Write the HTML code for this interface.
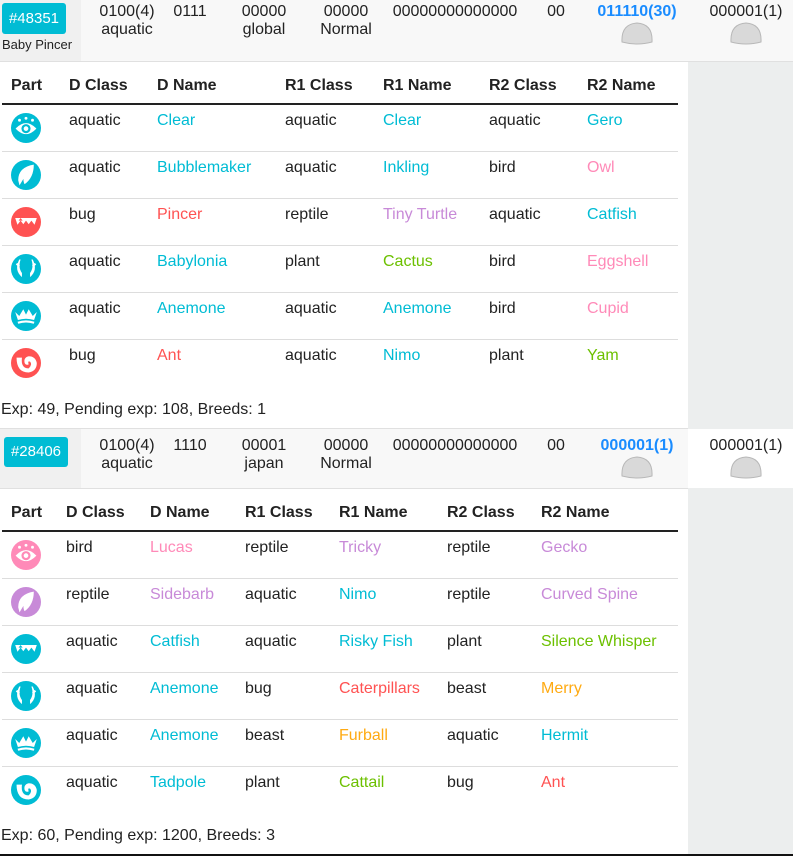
<!DOCTYPE html>
<html><head><meta charset="utf-8"><style>
*{margin:0;padding:0;box-sizing:border-box}
body{width:793px;height:856px;position:relative;overflow:hidden;background:#fff;font-family:"Liberation Sans",sans-serif;font-size:16px;color:#222}
.a{position:absolute;white-space:nowrap;line-height:18px}
.c{transform:translateX(-50%);text-align:center}
.b{font-weight:bold}
.aq{color:#00bcd4}.bu{color:#ff5252}.re{color:#c88ad8}.pl{color:#6cc000}.bi{color:#ff8ab8}.be{color:#ffaa12}
.tag{position:absolute;background:#00bcd4;color:#fff;border-radius:3px;font-size:15px;text-align:center}
.hl{position:absolute;height:1px;background:#ddd}
.ic{position:absolute;left:11px;width:30px;height:30px}
.egg{position:absolute;width:34px;height:25px}
</style></head><body>
<div style="position:absolute;left:688px;top:61px;width:105px;height:368px;background:#eceeee"></div>
<div style="position:absolute;left:688px;top:488px;width:105px;height:366px;background:#eceeee"></div>
<div style="position:absolute;left:0;top:0;width:793px;height:61px;background:#f8f8f8"></div>
<div style="position:absolute;left:0;top:0;width:81px;height:61px;background:#f0f0f0"></div>
<div class="hl" style="left:0;top:61px;width:793px;background:#e0e0e0"></div>
<div style="position:absolute;left:0;top:429px;width:688px;height:59px;background:#f8f8f8"></div>
<div style="position:absolute;left:0;top:429px;width:81px;height:59px;background:#f0f0f0"></div>
<div class="hl" style="left:0;top:428px;width:688px;background:#e0e0e0"></div>
<div class="hl" style="left:0;top:488px;width:688px;background:#e0e0e0"></div>
<div style="position:absolute;left:0;top:854px;width:793px;height:2px;background:#111"></div>

<svg width="0" height="0" style="position:absolute"><defs>
<g id="eye" transform="translate(15 15) scale(1.3) translate(-15 -15)"><path d="M7 15.5 Q15 7 23 15.5 Q15 24 7 15.5Z" fill="#fff"/><circle cx="15" cy="15.5" r="3.5" fill="currentColor"/><circle cx="15" cy="15.5" r="1.8" fill="#fff"/><circle cx="10" cy="9" r="1.1" fill="#fff"/><circle cx="15" cy="7.5" r="1.1" fill="#fff"/><circle cx="20" cy="9" r="1.1" fill="#fff"/></g>
<g id="leaf" transform="translate(15 15) scale(1.3) translate(-15 -15)"><path d="M21 7 Q9 9 9 19 L10 23 L13 18 Q13 21 14 22 Q21 17 21 7Z" fill="#fff"/></g>
<g id="teeth" transform="translate(15 15) scale(1.35) translate(-15 -15)"><path d="M7 12 H23 L21 18 H9Z" fill="#fff"/><path d="M8 18 L11 14 L14 18Z M12 18 L15 14 L18 18Z M16 18 L19 14 L22 18Z M9.5 14 L11 12 L12.5 14Z" fill="currentColor"/></g>
<g id="horn" transform="translate(15 15) scale(1.35) translate(-15 -15)"><path d="M10 8 Q6 16 12 21 L12 18 Q9 14 11 8Z M20 8 Q24 16 18 21 L18 18 Q21 14 19 8Z" fill="#fff"/><path d="M8 11 L10 13 M22 11 L20 13" stroke="#fff" stroke-width="1.5"/></g>
<g id="crown" transform="translate(15 15) scale(1.35) translate(-15 -15)"><path d="M7 12 L10 15 L13 10 L15 14 L17 10 L20 15 L23 12 L21 18 Q15 16 9 18Z" fill="#fff"/><path d="M9 20 Q15 18 21 20" stroke="#fff" stroke-width="1.6" fill="none"/></g>
<g id="tail" transform="translate(15 15) scale(1.35) translate(-15 -15)"><path d="M8 11 Q8 22 17 22 Q23 21 23 15 Q22 10 17 10 Q13 11 14 15 Q15 17 17 16 Q16 13 18 14 Q20 16 17 19 Q11 19 12 11Z" fill="#fff"/></g>
<g id="eg"><path d="M2 21 Q1 3 17 2 Q33 3 32 21 Q17 25 2 21Z" fill="#d9d9d9" stroke="#b8b8b8"/></g>
</defs></svg>

<!-- Header 1 -->
<div class="tag" style="left:2px;top:3px;width:64px;height:31px;line-height:31px">#48351</div>
<div class="a" style="left:2px;top:37px;font-size:13px;line-height:16px">Baby Pincer</div>
<div class="a c" style="left:127px;top:3px">0100(4)<br>aquatic</div>
<div class="a c" style="left:190px;top:3px">0111</div>
<div class="a c" style="left:264px;top:3px">00000<br>global</div>
<div class="a c" style="left:346px;top:3px">00000<br>Normal</div>
<div class="a c" style="left:455px;top:3px">00000000000000</div>
<div class="a c" style="left:556px;top:3px">00</div>
<div class="a c b" style="left:637px;top:3px;color:#1a8cff">011110(30)</div>
<div class="a c" style="left:746px;top:3px">000001(1)</div>
<svg class="egg" style="left:620px;top:21px"><use href="#eg"/></svg>
<svg class="egg" style="left:729px;top:21px"><use href="#eg"/></svg>

<!-- Table 1 -->
<div class="a b" style="left:11px;top:77px">Part</div>
<div class="a b" style="left:69px;top:77px">D Class</div>
<div class="a b" style="left:157px;top:77px">D Name</div>
<div class="a b" style="left:285px;top:77px">R1 Class</div>
<div class="a b" style="left:383px;top:77px">R1 Name</div>
<div class="a b" style="left:489px;top:77px">R2 Class</div>
<div class="a b" style="left:587px;top:77px">R2 Name</div>
<div class="hl" style="left:2px;top:103px;width:676px;height:2px;background:#222"></div>
<div class="hl" style="left:2px;top:151px;width:676px"></div>
<div class="hl" style="left:2px;top:198px;width:676px"></div>
<div class="hl" style="left:2px;top:245px;width:676px"></div>
<div class="hl" style="left:2px;top:292px;width:676px"></div>
<div class="hl" style="left:2px;top:339px;width:676px"></div>

<svg class="ic" style="top:113px;color:#00bcd4"><circle cx="15" cy="15" r="15" fill="#00bcd4"/><use href="#eye"/></svg>
<svg class="ic" style="top:160px"><circle cx="15" cy="15" r="15" fill="#00bcd4"/><use href="#leaf"/></svg>
<svg class="ic" style="top:207px;color:#ff5252"><circle cx="15" cy="15" r="15" fill="#ff5252"/><use href="#teeth"/></svg>
<svg class="ic" style="top:254px"><circle cx="15" cy="15" r="15" fill="#00bcd4"/><use href="#horn"/></svg>
<svg class="ic" style="top:301px"><circle cx="15" cy="15" r="15" fill="#00bcd4"/><use href="#crown"/></svg>
<svg class="ic" style="top:348px"><circle cx="15" cy="15" r="15" fill="#ff5252"/><use href="#tail"/></svg>

<div class="a" style="left:69px;top:112px">aquatic</div><div class="a aq" style="left:157px;top:112px">Clear</div><div class="a" style="left:285px;top:112px">aquatic</div><div class="a aq" style="left:383px;top:112px">Clear</div><div class="a" style="left:489px;top:112px">aquatic</div><div class="a aq" style="left:587px;top:112px">Gero</div>
<div class="a" style="left:69px;top:159px">aquatic</div><div class="a aq" style="left:157px;top:159px">Bubblemaker</div><div class="a" style="left:285px;top:159px">aquatic</div><div class="a aq" style="left:383px;top:159px">Inkling</div><div class="a" style="left:489px;top:159px">bird</div><div class="a bi" style="left:587px;top:159px">Owl</div>
<div class="a" style="left:69px;top:206px">bug</div><div class="a bu" style="left:157px;top:206px">Pincer</div><div class="a" style="left:285px;top:206px">reptile</div><div class="a re" style="left:383px;top:206px">Tiny Turtle</div><div class="a" style="left:489px;top:206px">aquatic</div><div class="a aq" style="left:587px;top:206px">Catfish</div>
<div class="a" style="left:69px;top:253px">aquatic</div><div class="a aq" style="left:157px;top:253px">Babylonia</div><div class="a" style="left:285px;top:253px">plant</div><div class="a pl" style="left:383px;top:253px">Cactus</div><div class="a" style="left:489px;top:253px">bird</div><div class="a bi" style="left:587px;top:253px">Eggshell</div>
<div class="a" style="left:69px;top:300px">aquatic</div><div class="a aq" style="left:157px;top:300px">Anemone</div><div class="a" style="left:285px;top:300px">aquatic</div><div class="a aq" style="left:383px;top:300px">Anemone</div><div class="a" style="left:489px;top:300px">bird</div><div class="a bi" style="left:587px;top:300px">Cupid</div>
<div class="a" style="left:69px;top:347px">bug</div><div class="a bu" style="left:157px;top:347px">Ant</div><div class="a" style="left:285px;top:347px">aquatic</div><div class="a aq" style="left:383px;top:347px">Nimo</div><div class="a" style="left:489px;top:347px">plant</div><div class="a pl" style="left:587px;top:347px">Yam</div>
<div class="a" style="left:1px;top:401px">Exp: 49, Pending exp: 108, Breeds: 1</div>

<!-- Header 2 -->
<div class="tag" style="left:4px;top:437px;width:64px;height:30px;line-height:30px">#28406</div>
<div class="a c" style="left:127px;top:437px">0100(4)<br>aquatic</div>
<div class="a c" style="left:190px;top:437px">1110</div>
<div class="a c" style="left:264px;top:437px">00001<br>japan</div>
<div class="a c" style="left:346px;top:437px">00000<br>Normal</div>
<div class="a c" style="left:455px;top:437px">00000000000000</div>
<div class="a c" style="left:556px;top:437px">00</div>
<div class="a c b" style="left:637px;top:437px;color:#1a8cff">000001(1)</div>
<div class="a c" style="left:746px;top:437px">000001(1)</div>
<svg class="egg" style="left:620px;top:455px"><use href="#eg"/></svg>
<svg class="egg" style="left:729px;top:455px"><use href="#eg"/></svg>

<!-- Table 2 -->
<div class="a b" style="left:11px;top:504px">Part</div>
<div class="a b" style="left:66px;top:504px">D Class</div>
<div class="a b" style="left:150px;top:504px">D Name</div>
<div class="a b" style="left:245px;top:504px">R1 Class</div>
<div class="a b" style="left:339px;top:504px">R1 Name</div>
<div class="a b" style="left:447px;top:504px">R2 Class</div>
<div class="a b" style="left:541px;top:504px">R2 Name</div>
<div class="hl" style="left:2px;top:530px;width:676px;height:2px;background:#222"></div>
<div class="hl" style="left:2px;top:578px;width:676px"></div>
<div class="hl" style="left:2px;top:625px;width:676px"></div>
<div class="hl" style="left:2px;top:672px;width:676px"></div>
<div class="hl" style="left:2px;top:719px;width:676px"></div>
<div class="hl" style="left:2px;top:766px;width:676px"></div>

<svg class="ic" style="top:540px;color:#ff8ab8"><circle cx="15" cy="15" r="15" fill="#ff8ab8"/><use href="#eye"/></svg>
<svg class="ic" style="top:587px"><circle cx="15" cy="15" r="15" fill="#c88ad8"/><use href="#leaf"/></svg>
<svg class="ic" style="top:634px;color:#00bcd4"><circle cx="15" cy="15" r="15" fill="#00bcd4"/><use href="#teeth"/></svg>
<svg class="ic" style="top:681px"><circle cx="15" cy="15" r="15" fill="#00bcd4"/><use href="#horn"/></svg>
<svg class="ic" style="top:728px"><circle cx="15" cy="15" r="15" fill="#00bcd4"/><use href="#crown"/></svg>
<svg class="ic" style="top:775px"><circle cx="15" cy="15" r="15" fill="#00bcd4"/><use href="#tail"/></svg>

<div class="a" style="left:66px;top:539px">bird</div><div class="a bi" style="left:150px;top:539px">Lucas</div><div class="a" style="left:245px;top:539px">reptile</div><div class="a re" style="left:339px;top:539px">Tricky</div><div class="a" style="left:447px;top:539px">reptile</div><div class="a re" style="left:541px;top:539px">Gecko</div>
<div class="a" style="left:66px;top:586px">reptile</div><div class="a re" style="left:150px;top:586px">Sidebarb</div><div class="a" style="left:245px;top:586px">aquatic</div><div class="a aq" style="left:339px;top:586px">Nimo</div><div class="a" style="left:447px;top:586px">reptile</div><div class="a re" style="left:541px;top:586px">Curved Spine</div>
<div class="a" style="left:66px;top:633px">aquatic</div><div class="a aq" style="left:150px;top:633px">Catfish</div><div class="a" style="left:245px;top:633px">aquatic</div><div class="a aq" style="left:339px;top:633px">Risky Fish</div><div class="a" style="left:447px;top:633px">plant</div><div class="a pl" style="left:541px;top:633px">Silence Whisper</div>
<div class="a" style="left:66px;top:680px">aquatic</div><div class="a aq" style="left:150px;top:680px">Anemone</div><div class="a" style="left:245px;top:680px">bug</div><div class="a bu" style="left:339px;top:680px">Caterpillars</div><div class="a" style="left:447px;top:680px">beast</div><div class="a be" style="left:541px;top:680px">Merry</div>
<div class="a" style="left:66px;top:727px">aquatic</div><div class="a aq" style="left:150px;top:727px">Anemone</div><div class="a" style="left:245px;top:727px">beast</div><div class="a be" style="left:339px;top:727px">Furball</div><div class="a" style="left:447px;top:727px">aquatic</div><div class="a aq" style="left:541px;top:727px">Hermit</div>
<div class="a" style="left:66px;top:774px">aquatic</div><div class="a aq" style="left:150px;top:774px">Tadpole</div><div class="a" style="left:245px;top:774px">plant</div><div class="a pl" style="left:339px;top:774px">Cattail</div><div class="a" style="left:447px;top:774px">bug</div><div class="a bu" style="left:541px;top:774px">Ant</div>
<div class="a" style="left:1px;top:827px">Exp: 60, Pending exp: 1200, Breeds: 3</div>
</body></html>
